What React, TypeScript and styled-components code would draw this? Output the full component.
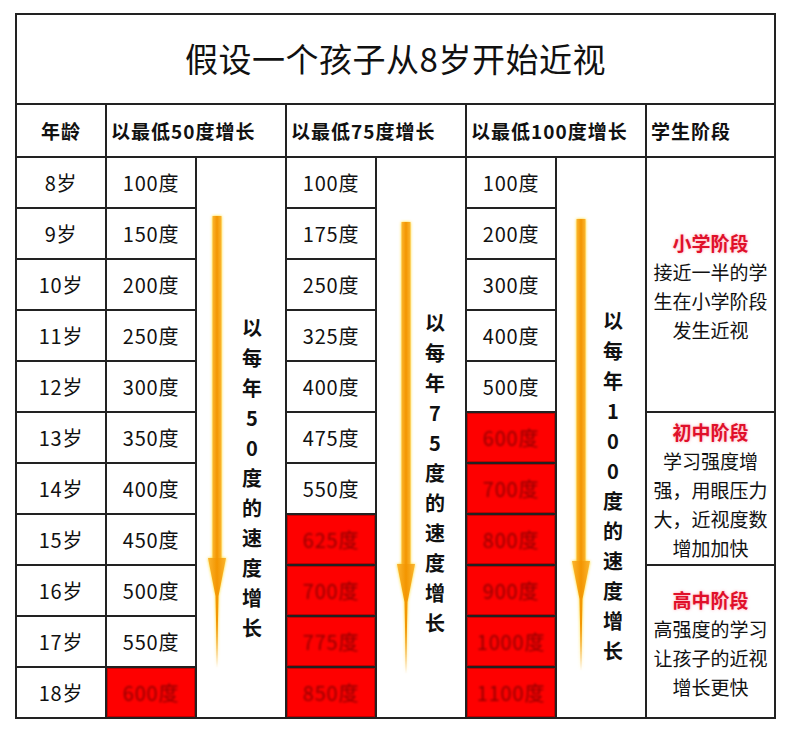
import styled, { createGlobalStyle } from "styled-components";

const GlobalStyle = createGlobalStyle`
    html, body {
        margin: 0;
        padding: 0;
        background: #ffffff;
    }
    body {
        font-family: "Noto Sans CJK SC", "Noto Sans", sans-serif;
        color: #111111;
    }
`;

const Page = styled.div`
    width: 793px;
    height: 737px;
    padding: 13px 0 0 15px;
    box-sizing: border-box;
`;

const Table = styled.div`
    display: grid;
    grid-template-columns: repeat(7, 90px) 129px;
    grid-template-rows: 90px 53px repeat(11, 51px);
    border-top: 2px solid #222;
    border-left: 2px solid #222;
    width: max-content;
`;

const Cell = styled.div`
    box-sizing: border-box;
    border-right: 2px solid #222;
    border-bottom: 2px solid #222;
    display: flex;
    align-items: center;
`;

const TitleCell = styled(Cell)`
    grid-column: 1 / -1;
    justify-content: center;
    font-size: 33px;
    font-weight: 400;
    letter-spacing: 0.5px;
    padding-bottom: 2px;
`;

const HeadCell = styled(Cell)<{ $span?: number; $center?: boolean }>`
    grid-column: span ${(p) => p.$span ?? 1};
    justify-content: ${(p) => (p.$center ? "center" : "flex-start")};
    padding-left: ${(p) => (p.$center ? "0" : "4px")};
    font-size: 19px;
    font-weight: 700;
    letter-spacing: 1px;
`;

const ValueCell = styled(Cell)<{ $red?: boolean }>`
    justify-content: center;
    font-size: 20px;
    letter-spacing: 0.8px;
    background: ${(p) => (p.$red ? "#fe0000" : "#ffffff")};
    box-shadow: ${(p) => (p.$red ? "inset 0 0 0 1px #c20000" : "none")};
`;

const RedText = styled.span`
    color: #8e0000;
    filter: blur(0.9px);
`;

const ArrowCell = styled(Cell)<{ $pad: number }>`
    grid-row: span 11;
    align-items: flex-start;
    padding-left: ${(p) => p.$pad}px;
`;

const ArrowSvg = styled.svg<{ $top: number }>`
    margin-top: ${(p) => p.$top}px;
    flex-shrink: 0;
    filter: drop-shadow(0 0 1.5px rgba(255, 214, 0, 0.9));
`;

const VerticalText = styled.div<{ $gap: number; $top: number }>`
    width: 24px;
    margin-left: ${(p) => p.$gap}px;
    margin-top: ${(p) => p.$top}px;
    display: flex;
    flex-direction: column;
    align-items: center;
    font-size: 20px;
    font-weight: 700;
    line-height: 30px;
    color: #111;
`;

const StageCell = styled(Cell)<{ $rows: number }>`
    grid-row: span ${(p) => p.$rows};
    flex-direction: column;
    justify-content: center;
    text-align: center;
    font-size: 19px;
    line-height: 29px;
    padding-top: 2px;
`;

const StageTitle = styled.div`
    color: #e0102a;
    font-weight: 700;
    font-size: 19px;
    text-shadow: 0 0 3px rgba(255, 120, 140, 0.7);
`;

type Value = { text: string; red?: boolean };

const ages = ["8岁", "9岁", "10岁", "11岁", "12岁", "13岁", "14岁", "15岁", "16岁", "17岁", "18岁"];

const groups: {
    values: Value[];
    label: string;
    pad: number;
    arrowTop: number;
    gap: number;
    textTop: number;
}[] = [
    {
        values: ["100", "150", "200", "250", "300", "350", "400", "450", "500", "550", "600"].map((v, i) => ({
            text: `${v}度`,
            red: i >= 10,
        })),
        label: "以每年50度的速度增长",
        pad: 10,
        arrowTop: 58,
        gap: 13,
        textTop: 155,
    },
    {
        values: ["100", "175", "250", "325", "400", "475", "550", "625", "700", "775", "850"].map((v, i) => ({
            text: `${v}度`,
            red: i >= 7,
        })),
        label: "以每年75度的速度增长",
        pad: 19,
        arrowTop: 64,
        gap: 7,
        textTop: 150,
    },
    {
        values: ["100", "200", "300", "400", "500", "600", "700", "800", "900", "1000", "1100"].map((v, i) => ({
            text: `${v}度`,
            red: i >= 5,
        })),
        label: "以每年100度的速度增长",
        pad: 14,
        arrowTop: 61,
        gap: 10,
        textTop: 148,
    },
];

const stages = [
    { rows: 5, title: "小学阶段", lines: ["接近一半的学", "生在小学阶段", "发生近视"] },
    { rows: 3, title: "初中阶段", lines: ["学习强度增", "强，用眼压力", "大，近视度数", "增加加快"] },
    { rows: 3, title: "高中阶段", lines: ["高强度的学习", "让孩子的近视", "增长更快"] },
];

function Arrow({ top }: { top: number }) {
    return (
        <ArrowSvg $top={top} width="20" height="452" viewBox="0 0 20 452">
            <defs>
                <linearGradient id="arrowFill" x1="0" x2="1" y1="0" y2="0">
                    <stop offset="0" stopColor="#fbb630" />
                    <stop offset="0.5" stopColor="#f39500" />
                    <stop offset="1" stopColor="#fbb630" />
                </linearGradient>
            </defs>
            <rect x="5.5" y="0" width="9" height="344" fill="url(#arrowFill)" />
            <polygon points="1,342 19,342 11.5,380 10,452 8.5,380" fill="url(#arrowFill)" />
        </ArrowSvg>
    );
}

export default function App() {
    const cells: JSX.Element[] = [];
    ages.forEach((age, row) => {
        cells.push(
            <ValueCell key={`age-${row}`}>{age}</ValueCell>
        );
        groups.forEach((g, gi) => {
            const v = g.values[row];
            cells.push(
                <ValueCell key={`v-${gi}-${row}`} $red={v.red}>
                    {v.red ? <RedText>{v.text}</RedText> : v.text}
                </ValueCell>
            );
            if (row === 0) {
                cells.push(
                    <ArrowCell key={`a-${gi}`} $pad={g.pad}>
                        <Arrow top={g.arrowTop} />
                        <VerticalText $gap={g.gap} $top={g.textTop}>
                            {Array.from(g.label).map((ch, i) => (
                                <span key={i}>{ch}</span>
                            ))}
                        </VerticalText>
                    </ArrowCell>
                );
            }
        });
        if (row === 0 || row === 5 || row === 8) {
            const s = stages[row === 0 ? 0 : row === 5 ? 1 : 2];
            cells.push(
                <StageCell key={`s-${row}`} $rows={s.rows}>
                    <StageTitle>{s.title}</StageTitle>
                    {s.lines.map((l) => (
                        <div key={l}>{l}</div>
                    ))}
                </StageCell>
            );
        }
    });

    return (
        <Page>
            <GlobalStyle />
            <Table>
                <TitleCell>假设一个孩子从8岁开始近视</TitleCell>
                <HeadCell $center>年龄</HeadCell>
                <HeadCell $span={2}>以最低50度增长</HeadCell>
                <HeadCell $span={2}>以最低75度增长</HeadCell>
                <HeadCell $span={2}>以最低100度增长</HeadCell>
                <HeadCell>学生阶段</HeadCell>
                {cells}
            </Table>
        </Page>
    );
}
